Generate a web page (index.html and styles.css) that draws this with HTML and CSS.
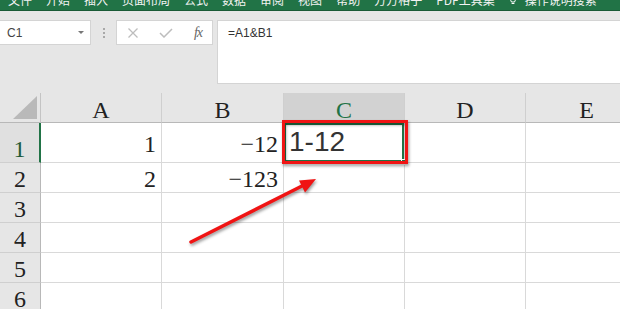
FILE: index.html
```html
<!DOCTYPE html>
<html>
    <head>
        <meta charset="utf-8">
        <title>Excel</title>
        <link rel="stylesheet" href="styles.css">
    </head>
    <body>
        <div class="ribbon">
            <span class="tab">文件</span>
            <span class="tab">开始</span>
            <span class="tab">插入</span>
            <span class="tab">页面布局</span>
            <span class="tab">公式</span>
            <span class="tab">数据</span>
            <span class="tab">审阅</span>
            <span class="tab">视图</span>
            <span class="tab">帮助</span>
            <span class="tab">方方格子</span>
            <span class="tab">PDF工具集</span>
            <span class="tab tell">
                <svg class="bulb" width="8" height="12" viewBox="0 0 8 12">
                    <path d="M4 1 C1.8 1 0.8 2.6 0.8 4 C0.8 5.6 2.2 6.4 2.4 8 L5.6 8 C5.8 6.4 7.2 5.6 7.2 4 C7.2 2.6 6.2 1 4 1 Z M2.6 9.5 L5.4 9.5" fill="none" stroke="#fff" stroke-width="1"/>
                </svg>
                操作说明搜索
            </span>
        </div>

        <div class="formula_row">
            <div class="name_box">
                <span>C1</span>
                <span class="drop"></span>
            </div>
            <div class="grip">
                <i></i><i></i><i></i>
            </div>
            <div class="fx_box">
                <svg width="12" height="12" viewBox="0 0 12 12">
                    <path d="M1.5 1.5 L10.5 10.5 M10.5 1.5 L1.5 10.5" stroke="#bdbdbd" stroke-width="1.3" fill="none"/>
                </svg>
                <svg width="14" height="10" viewBox="0 0 14 10">
                    <path d="M1 5 L5 9 L13 1" stroke="#bdbdbd" stroke-width="1.5" fill="none"/>
                </svg>
                <span class="fx">fx</span>
            </div>
            <div class="formula_input">=A1&amp;B1</div>
        </div>

        <div class="sheet">
            <div class="corner">
                <svg width="24" height="23" viewBox="0 0 24 23">
                    <path d="M24 0 L24 23 L0 23 Z" fill="#b9b9b9"/>
                </svg>
            </div>
            <div class="col_head">A</div>
            <div class="col_head">B</div>
            <div class="col_head active_col">C</div>
            <div class="col_head">D</div>
            <div class="col_head">E</div>

            <div class="row_head active_row">1</div>
            <div class="cell num first">1</div>
            <div class="cell num first">&minus;12</div>
            <div class="cell first active_cell">1-12<span class="handle"></span></div>
            <div class="cell"></div>
            <div class="cell"></div>

            <div class="row_head">2</div>
            <div class="cell num">2</div>
            <div class="cell num">&minus;123</div>
            <div class="cell"></div>
            <div class="cell"></div>
            <div class="cell"></div>

            <div class="row_head">3</div>
            <div class="cell"></div><div class="cell"></div><div class="cell"></div><div class="cell"></div><div class="cell"></div>

            <div class="row_head">4</div>
            <div class="cell"></div><div class="cell"></div><div class="cell"></div><div class="cell"></div><div class="cell"></div>

            <div class="row_head">5</div>
            <div class="cell"></div><div class="cell"></div><div class="cell"></div><div class="cell"></div><div class="cell"></div>

            <div class="row_head">6</div>
            <div class="cell"></div><div class="cell"></div><div class="cell"></div><div class="cell"></div><div class="cell"></div>
        </div>

        <!-- red marks drawn over the sheet -->
        <svg class="marks" width="620" height="309" viewBox="0 0 620 309">
            <g class="mark_shadow">
                <rect x="283.5" y="121.5" width="123" height="41" fill="none" stroke="#f01414" stroke-width="3"/>
                <line x1="191" y1="242" x2="303" y2="185.5" stroke="#f01414" stroke-width="3.5" stroke-linecap="round"/>
                <path d="M316 179 L305 192.5 L299 180.5 Z" fill="#f01414"/>
            </g>
        </svg>
    </body>
</html>
```

FILE: styles.css
```css
* {
    box-sizing: border-box;
}

body {
    margin: 0;
    width: 620px;
    height: 309px;
    overflow: hidden;
    background-color: #e6e6e6;
    font-family: "Liberation Sans", "Noto Sans CJK SC", sans-serif;
    position: relative;
}

.ribbon {
    height: 11px;
    background-color: #217346;
    border-bottom: 1px solid #195a36;
    display: flex;
    flex-direction: row;
    align-items: flex-end;
    gap: 14px;
    padding: 0 0 3px 8px;
    overflow: hidden;
}

.ribbon .tab {
    font-family: "Noto Sans CJK SC", sans-serif;
    font-size: 12px;
    line-height: 14px;
    color: #f2f2f2;
    white-space: nowrap;
    flex-shrink: 0;
}

.ribbon .tell {
    display: flex;
    align-items: flex-end;
    gap: 8px;
}

.ribbon .bulb {
    margin-bottom: 1px;
}

.formula_row {
    display: flex;
    flex-direction: row;
    align-items: flex-start;
    padding: 9px 0;
    height: 82px;
}

.name_box {
    width: 92px;
    height: 25px;
    margin-left: -1px;
    background-color: #ffffff;
    border: 1px solid #d4d4d4;
    display: flex;
    align-items: center;
    justify-content: space-between;
    padding: 0 6px 0 7px;
    font-size: 12px;
    color: #444444;
}

.name_box .drop {
    width: 0;
    height: 0;
    border-left: 3px solid transparent;
    border-right: 3px solid transparent;
    border-top: 3px solid #777777;
}

.grip {
    width: 25px;
    height: 25px;
    display: flex;
    flex-direction: column;
    align-items: center;
    justify-content: center;
    gap: 2px;
}

.grip i {
    width: 2px;
    height: 2px;
    background-color: #a8a8a8;
}

.fx_box {
    width: 97px;
    height: 25px;
    background-color: #ffffff;
    border: 1px solid #d4d4d4;
    display: flex;
    align-items: center;
    justify-content: space-between;
    padding: 0 10px 0 10px;
}

.fx_box .fx {
    font-family: "Liberation Serif", serif;
    font-style: italic;
    font-size: 14px;
    color: #666666;
    letter-spacing: -1px;
}

.formula_input {
    flex: 1;
    margin-left: 4px;
    height: 64px;
    background-color: #ffffff;
    border: 1px solid #d4d4d4;
    border-right: none;
    padding: 4px 0 0 10px;
    font-size: 12px;
    line-height: 16px;
    color: #333333;
}

.sheet {
    display: grid;
    grid-template-columns: 41px 121px 122px 121px 121px 122px;
    grid-template-rows: 30px 40px repeat(5, 30px);
    width: 648px;
    font-family: "Liberation Serif", serif;
    font-size: 24px;
    line-height: 24px;
    color: #222222;
}

.corner {
    border-right: 1px solid #c4c4c4;
    border-bottom: 1px solid #b8b8b8;
    display: flex;
    justify-content: flex-end;
    align-items: flex-end;
    padding: 0 3px 3px 0;
}

.col_head {
    border-right: 1px solid #cfcfcf;
    border-bottom: 1px solid #b8b8b8;
    display: flex;
    justify-content: center;
    align-items: flex-end;
    color: #222222;
}

.active_col {
    background-color: #d2d2d2;
    color: #217346;
}

.row_head {
    border-right: 1px solid #b8b8b8;
    border-bottom: 1px solid #cfcfcf;
    display: flex;
    justify-content: center;
    align-items: flex-end;
    padding-bottom: 1px;
}

.active_row {
    background-color: #e0e0e0;
    border-right: 2px solid #217346;
    color: #1e5a38;
}

.cell {
    background-color: #ffffff;
    border-right: 1px solid #d9d9d9;
    border-bottom: 1px solid #d9d9d9;
    display: flex;
    align-items: flex-end;
    padding-bottom: 1px;
}

.cell.num {
    justify-content: flex-end;
    padding-right: 5px;
}

.cell.first {
    padding-bottom: 6px;
}

.active_cell {
    position: relative;
    font-family: "Liberation Sans", sans-serif;
    font-size: 28px;
    line-height: 28px;
    color: #333333;
    padding-left: 5px;
    padding-bottom: 4px;
    box-shadow: inset 0 0 0 2px #217346;
}

.active_cell .handle {
    position: absolute;
    right: -3px;
    bottom: -3px;
    width: 6px;
    height: 6px;
    background-color: #217346;
    border: 1px solid #ffffff;
}

.marks {
    position: absolute;
    left: 0;
    top: 0;
    pointer-events: none;
}

.mark_shadow {
    filter: drop-shadow(1px 2px 1.5px rgba(0, 0, 0, 0.4));
}
```
